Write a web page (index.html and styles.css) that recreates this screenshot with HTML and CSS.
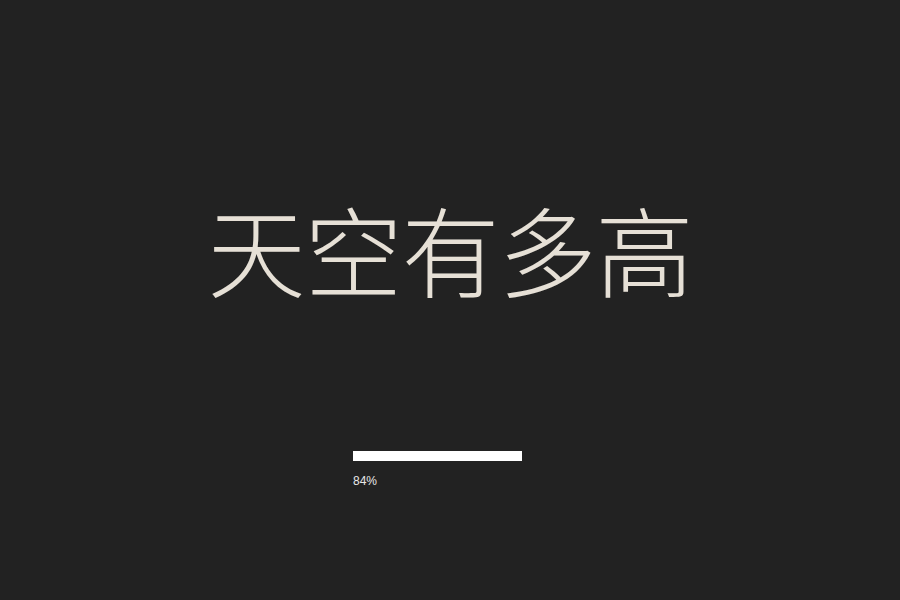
FILE: index.html
```html
<!DOCTYPE html>
<html lang="zh">
<head>
<meta charset="utf-8">
<title>天空有多高</title>
<link rel="stylesheet" href="styles.css">
</head>
<body>
<main class="stage">
  <h1 class="title">天空有多高</h1>
  <div class="loader">
    <div class="track"><div class="fill" style="width: 84.5%"></div></div>
    <div class="percent">84%</div>
  </div>
</main>
</body>
</html>
```
FILE: styles.css
```css
html, body {
  margin: 0;
  padding: 0;
  background: #222222;
}
.stage {
  width: 900px;
  height: 600px;
  display: flex;
  flex-direction: column;
  align-items: center;
  box-sizing: border-box;
  padding-top: 197px;
}
.title {
  margin: 0;
  font-family: "Noto Sans CJK SC", "Noto Sans CJK JP", sans-serif;
  font-weight: 200;
  font-size: 98px;
  line-height: 100px;
  letter-spacing: -1px;
  color: #e6e0d6;
}
.loader {
  margin-top: 154px;
  width: 200px;
  margin-left: 6px;
}
.track {
  height: 10px;
  width: 200px;
}
.fill {
  height: 10px;
  background: #ffffff;
}
.percent {
  margin-top: 13px;
  font-family: "Liberation Sans", Arial, sans-serif;
  font-size: 12px;
  line-height: 14px;
  color: #e8e8e8;
}
```
